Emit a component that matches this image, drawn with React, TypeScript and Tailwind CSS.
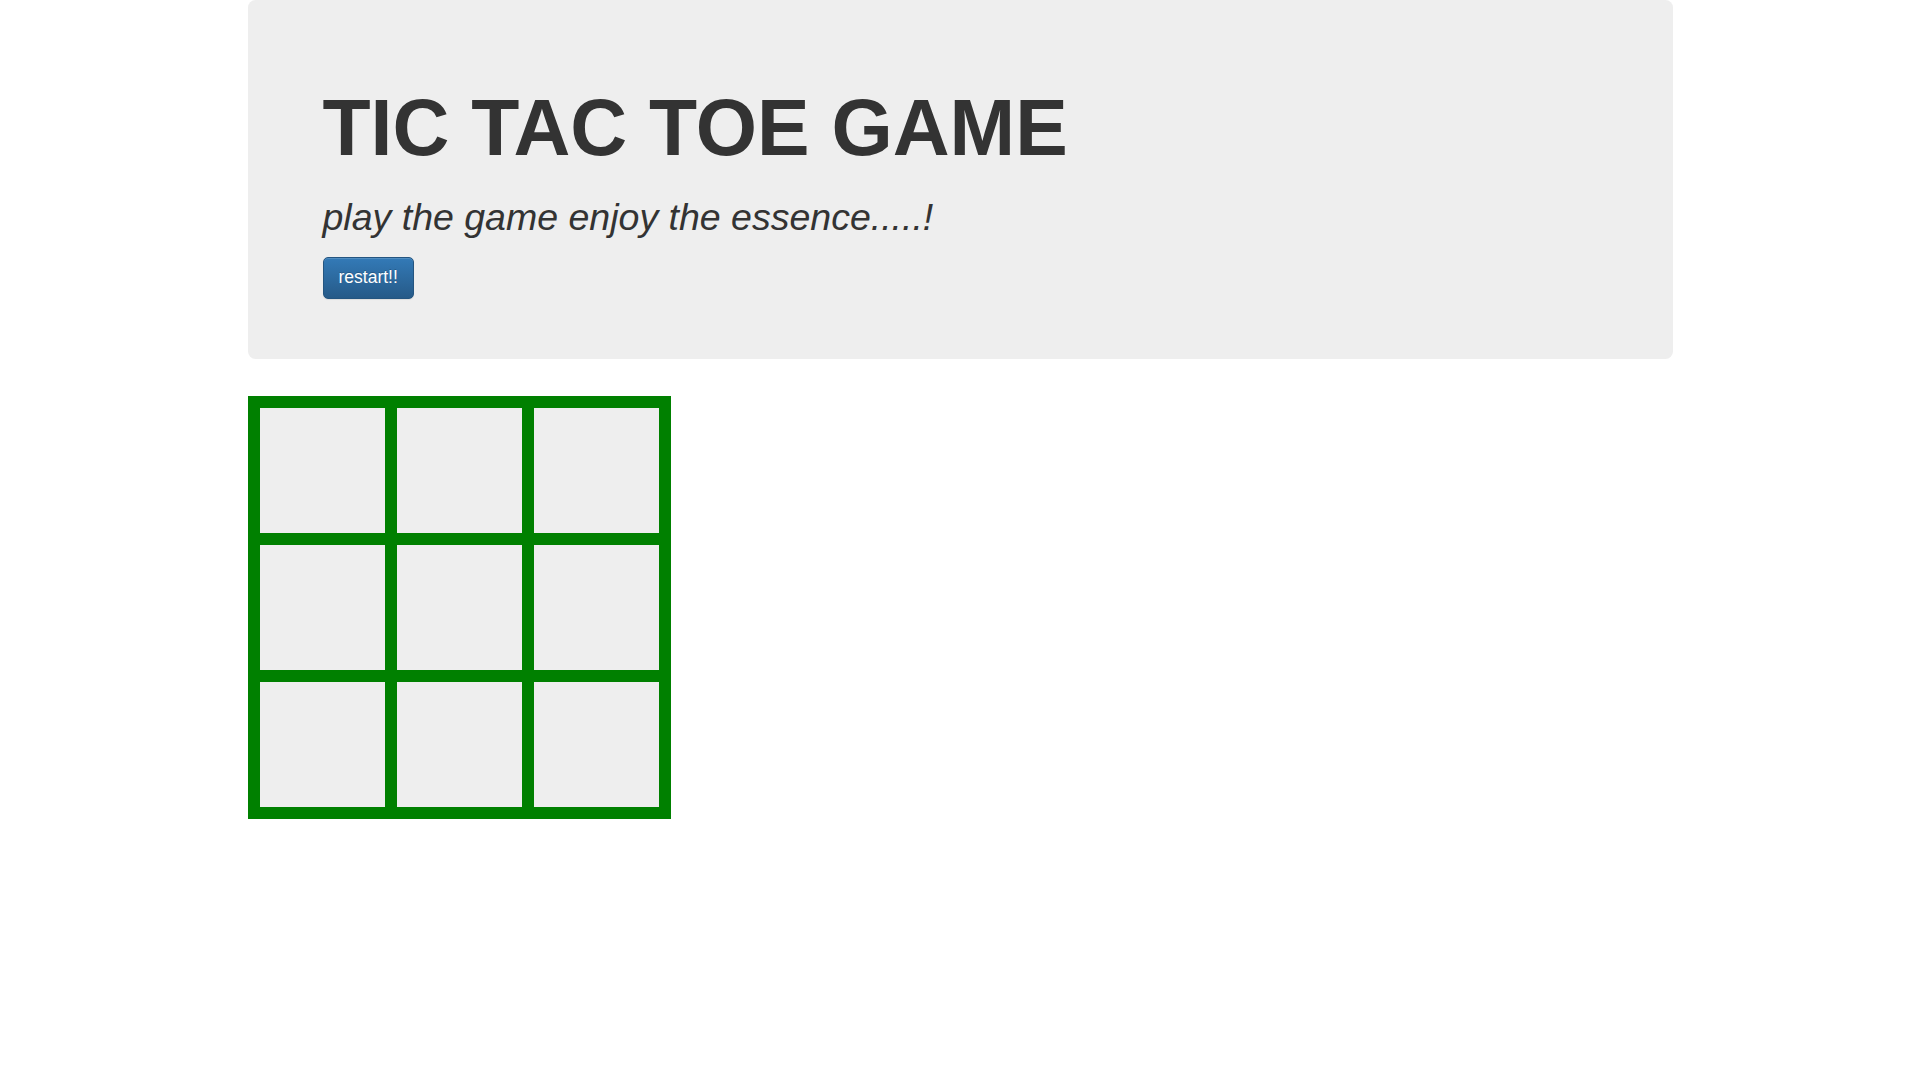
const cells = Array.from({ length: 9 }, (_, i) => i);

export default function App() {
  return (
    <div className="min-h-screen bg-white font-['Liberation_Sans',Arial,sans-serif] text-[#333333]">
      <div className="mx-auto w-[1425px]">
        <div className="rounded-[7.5px] bg-[#eeeeee] px-[75px] pt-[60px] pb-[60px]">
          <h1 className="mt-[25px] text-[78.75px] font-bold leading-[1.1]">
            TIC TAC TOE GAME
          </h1>
          <h2 className="mt-[25px] text-[37.5px] font-normal italic leading-[1.1]">
            play the game enjoy the essence.....!
          </h2>
          <button
            type="button"
            className="mt-[19px] block rounded-[5px] border-[1.25px] border-[#245580] bg-[linear-gradient(to_bottom,#337ab7_0%,#265a88_100%)] px-[15px] py-[7.5px] text-[17.5px] leading-[1.42857] text-white shadow-[inset_0_1px_0_rgba(255,255,255,0.15),0_1px_1px_rgba(0,0,0,0.075)] [text-shadow:0_-1px_0_rgba(0,0,0,0.2)]"
          >
            restart!!
          </button>
        </div>

        <div className="mt-[37px] grid w-[423px] grid-cols-3 gap-[12px] bg-[#008000] p-[12px]">
          {cells.map((i) => (
            <div key={i} className="h-[125px] w-[125px] bg-[#eeeeee]" />
          ))}
        </div>
      </div>
    </div>
  );
}
